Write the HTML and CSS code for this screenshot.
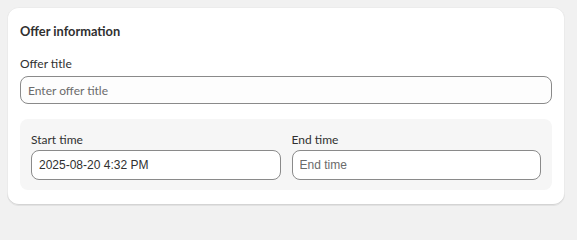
FILE: index.html
```html
<!DOCTYPE html>
<html>
<head>
<meta charset="utf-8">
<link rel="stylesheet" href="styles.css">
</head>
<body>
<div class="page">
  <section class="card">
    <h2 class="card-title">Offer information</h2>
    <div class="field">
      <label class="label">Offer title</label>
      <input class="input input-lg" type="text" placeholder="Enter offer title">
    </div>
    <div class="time-box">
      <div class="field">
        <label class="label">Start time</label>
        <input class="input input-time" type="text" value="2025-08-20 4:32 PM">
      </div>
      <div class="field">
        <label class="label">End time</label>
        <input class="input input-time" type="text" placeholder="End time">
      </div>
    </div>
  </section>
</div>
</body>
</html>
```

FILE: styles.css
```css
html, body {
  margin: 0;
  padding: 0;
  background: #f1f1f1;
}
body {
  font-family: Lato, "Open Sans", sans-serif;
  color: #303030;
}
.page {
  padding: 7px 12px 11px 7px;
}
.card {
  background: #ffffff;
  border-radius: 12px;
  padding: 14px 13px 15px 13px;
  box-shadow: 0 1px 0 0 rgba(26,26,26,0.07), inset 0 -1px 0 0 #d4d4d4, inset 1px 0 0 0 #ebebeb, inset -1px 0 0 0 #ebebeb, inset 0 1px 0 0 #ececec;
}
.card-title {
  margin: 0 0 15px 0;
  font-size: 12.8px;
  line-height: 20px;
  font-weight: 700;
  color: #303030;
}
.field {
  display: flex;
  flex-direction: column;
}
.label {
  font-size: 12px;
  line-height: 16px;
  margin-bottom: 4px;
  color: #303030;
}
.input {
  box-sizing: border-box;
  border: 1px solid #8a8a8a;
  border-radius: 8px;
  background: #fdfdfd;
  padding: 0 7px;
  font-family: "Liberation Sans", Arial, sans-serif;
  font-size: 12px;
  color: #303030;
  outline: none;
}
.input::placeholder {
  color: #6b6b6b;
}
.input-lg {
  height: 28px;
  font-family: Lato, "Open Sans", sans-serif;
  font-size: 12px;
}
.time-box {
  margin-top: 15px;
  background: #f6f6f6;
  border-radius: 8px;
  padding: 13px 11px 10px 11px;
  display: grid;
  grid-template-columns: 1fr 1fr;
  column-gap: 11px;
}
.time-box .label {
  margin-bottom: 2px;
}
.input-time {
  height: 30px;
  background: #ffffff;
}
```
